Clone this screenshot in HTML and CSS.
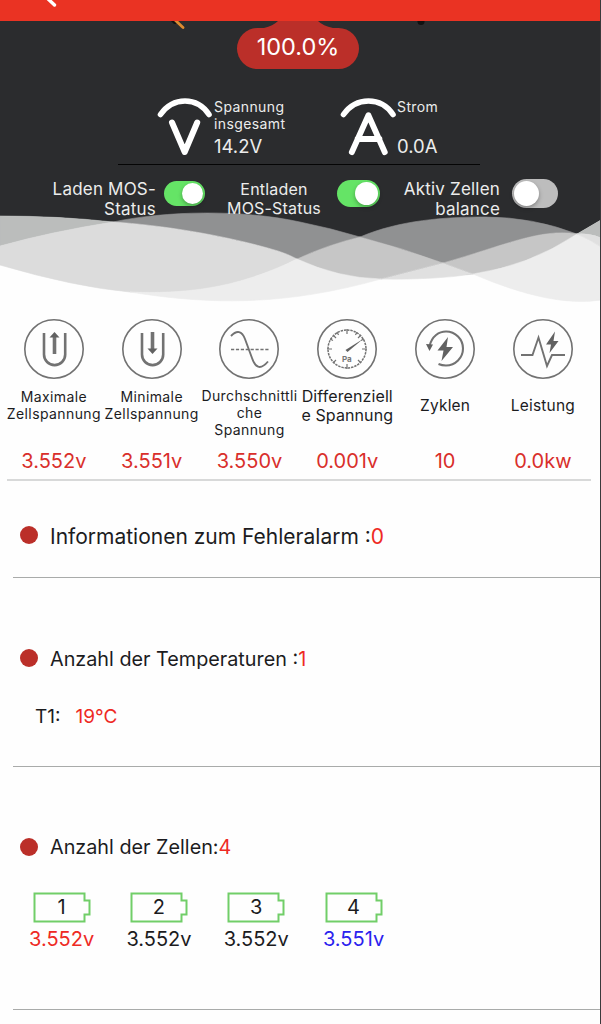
FILE: index.html
```
<!DOCTYPE html>
<html lang="de">
<head>
	<meta charset="utf-8">
	<title>BMS</title>
	<link rel="stylesheet" href="styles.css">
</head>
<body>
	<div class="topbar">
		<svg class="back" width="14" height="10" viewBox="0 0 14 10"><path d="M1-3 9.500 5" stroke="#fff" stroke-width="3.400" stroke-linecap="round"/></svg>
	</div>

	<div class="hero">
		<svg class="gauge" width="300" height="10" viewBox="150 21 300 10">
			<path d="M171 21h6l-1 3h-2z" fill="#111"/>
			<path d="M174 19l9 8.500" stroke="#dc8b30" stroke-width="2.800" stroke-linecap="round"/>
			<path d="M278 21q-5 5-14 7h69q-10-2-15-7z" fill="#bb2f29"/>
			<circle cx="421" cy="21.500" r="3.500" fill="#111"/>
		</svg>
		<div class="soc">100.0%</div>

		<div class="meters">
			<div class="meter">
				<svg width="56" height="60" viewBox="157 96 56 60" fill="none" stroke="#fff" stroke-linecap="round" stroke-linejoin="round">
					<path d="M160.500 114.500q9.500-13.500 24.500-13.500t24 13.500" stroke-width="5.600"/>
					<path d="M172 122.500l12.700 29.500 12.500-29.500" stroke-width="6"/>
				</svg>
				<div class="meter-text">
					<div class="meter-label">Spannung<br>insgesamt</div>
					<div class="meter-value">14.2V</div>
				</div>
			</div>
			<div class="meter">
				<svg width="56" height="60" viewBox="340 96 56 60" fill="none" stroke="#fff" stroke-linecap="round" stroke-linejoin="round">
					<path d="M343.500 114.500q9.500-13.500 25-13.500t24.500 13.500" stroke-width="5.600"/>
					<path d="M351.800 152.200l16.600-37 16.400 37M357.500 139h22" stroke-width="5.800"/>
				</svg>
				<div class="meter-text">
					<div class="meter-label">Strom</div>
					<div class="meter-value">0.0A</div>
				</div>
			</div>
		</div>

		<div class="switches">
			<div class="switch-label charge">Laden MOS-<br>Status</div>
			<div class="switch on charge-switch"></div>
			<div class="switch-label discharge">Entladen<br>MOS-Status</div>
			<div class="switch on discharge-switch"></div>
			<div class="switch-label balance">Aktiv Zellen<br>balance</div>
			<div class="switch balance-switch"></div>
		</div>
	</div>

	<svg class="waves" width="600" height="94" viewBox="0 210 600 94">
		<path d="M0 216Q60 216 113 222Q205 230 297 259L380 279 473 274Q525 263 577 234L601 220V304H0z" fill="#fefefe"/>
		<g stroke-width=".6">
			<path d="M0 216Q60 216 113 222Q50 232 0 246z" fill="#bbbdbc" stroke="#bbbdbc"/>
			<path d="M113 222C165 211 240 209 300 222Q330 228 360 237Q327 245 297 259Q288 254 278 251C225 235 160 225 113 222z" fill="#909192" stroke="#909192"/>
			<path d="M360 237C400 220 445 217 485 217Q533 217 577 234C540 228 503 246 443 263Q402 248 360 237z" fill="#909192" stroke="#909192"/>
			<path d="M0 246Q50 232 113 222C160 225 225 235 278 251Q288 254 297 259C235 290 180 294 130 292Q75 287 0 265z" fill="#dcdcdc" stroke="#dcdcdc"/>
			<path d="M297 259Q327 245 360 237Q402 248 443 263L381 279Q338 278 297 259z" fill="#c6c6c6" stroke="#c6c6c6"/>
			<path d="M443 263C503 246 540 228 577 234Q529 266 473 274z" fill="#c6c6c6" stroke="#c6c6c6"/>
			<path d="M381 279L443 263 473 274Q435 280 381 279z" fill="#e0e0e0" stroke="#e0e0e0"/>
			<path d="M130 292C180 294 235 290 297 259Q338 278 381 279C285 306 210 305 130 292z" fill="#ededed" stroke="#ededed"/>
			<path d="M473 274Q529 266 577 234Q591 240 601 247V300Q552 308 473 274z" fill="#ededed" stroke="#ededed"/>
			<path d="M577 234L601 220V238Q590 233 577 234z" fill="#bbbdbc" stroke="#bbbdbc"/>
			<path d="M577 234Q590 233 601 238V247Q591 240 577 234z" fill="#e0e0e0" stroke="#e0e0e0"/>
		</g>
	</svg>

	<div class="stats">
		<div class="stat">
			<svg class="stat-icon" viewBox="0 0 60 60">
				<circle cx="30" cy="30" r="29.200"/>
				<path d="M20 14v21.500a10.600 10.600 0 0 0 21.200 0V14" stroke-width="2.600"/>
				<path d="M30.500 35V17" stroke-width="3.600"/>
				<path class="solid" d="M30.500 13l5 5.500h-10z"/>
			</svg>
			<div class="stat-label">Maximale<br>Zellspannung</div>
			<div class="stat-value">3.552v</div>
		</div>
		<div class="stat">
			<svg class="stat-icon" viewBox="0 0 60 60">
				<circle cx="30" cy="30" r="29.200"/>
				<path d="M20 14v21.500a10.600 10.600 0 0 0 21.200 0V14" stroke-width="2.600"/>
				<path d="M30.500 13v18" stroke-width="3.600"/>
				<path class="solid" d="M30.500 35l5-5.500h-10z"/>
			</svg>
			<div class="stat-label">Minimale<br>Zellspannung</div>
			<div class="stat-value">3.551v</div>
		</div>
		<div class="stat">
			<svg class="stat-icon" viewBox="0 0 60 60">
				<circle cx="30" cy="30" r="29.200"/>
				<path d="M12 17C18 10.500 23 12 26 20l7 19c3 9 8 13 16 3.500" stroke-width="1.900"/>
				<path d="M12 30.500h38" stroke-width="1.600" stroke-dasharray="3.200 1.700"/>
			</svg>
			<div class="stat-label average">Durchschnittli<br>che<br>Spannung</div>
			<div class="stat-value">3.550v</div>
		</div>
		<div class="stat">
			<svg class="stat-icon" viewBox="0 0 60 60">
				<circle cx="30" cy="30" r="29.200"/>
				<circle cx="30" cy="30" r="19" stroke-width="1.500" stroke-dasharray="2.400 .9"/>
				<path d="M30 10v5M30 45v5M10 30h5M45 30h5M16 16l3 3M41 41l3 3M16 44l3-3M41 19l3-3M20 13l1.500 3M40 13l-1.500 3M13 20l3 1.500M47 20l-3 1.500" stroke-width="1.200"/>
				<path class="solid" d="M46 20L30.500 33l-2-2z"/>
				<text x="25" y="43">Pa</text>
			</svg>
			<div class="stat-label difference">Differenziell<br>e Spannung</div>
			<div class="stat-value">0.001v</div>
		</div>
		<div class="stat">
			<svg class="stat-icon" viewBox="0 0 60 60">
				<circle cx="30" cy="30" r="29.200"/>
				<path d="M14.500 27C17 17 24 12.500 31 12.500a17 17 0 0 1 0 34q-4 0-7.500-1.500" stroke-width="2.100"/>
				<path class="solid" d="M11 25l7 .5-3.500 6.500zM33 18l-10.500 13.500h6L26.500 42 38 28h-6.500z"/>
			</svg>
			<div class="stat-label single">Zyklen</div>
			<div class="stat-value">10</div>
		</div>
		<div class="stat">
			<svg class="stat-icon" viewBox="0 0 60 60">
				<circle cx="30" cy="30" r="29.200"/>
				<path d="M8 36h11.500l6-17.500L34 47l5-11h13" stroke-width="1.900"/>
				<path class="solid" d="M42 12.500L33 25.500h5L36.500 34 45.500 22H40.500z"/>
			</svg>
			<div class="stat-label single">Leistung</div>
			<div class="stat-value">0.0kw</div>
		</div>
	</div>

	<div class="section alarm">
		<div class="section-title"><i class="dot"></i><span>Informationen zum Fehleralarm :<b>0</b></span></div>
	</div>

	<div class="section temps">
		<div class="section-title"><i class="dot"></i><span class="clipped">Anzahl der Temperaturen :<b>1</b></span></div>
		<div class="temp"><span>T1:</span><b>19°C</b></div>
	</div>

	<div class="section cells">
		<div class="section-title"><i class="dot"></i><span>Anzahl der Zellen:<b>4</b></span></div>
		<div class="cell-list">
			<div class="cell max">
				<div class="battery"><svg viewBox="0 0 58 31"><path d="M1.500 1.500h50v7h5v14h-5v7h-50z"/></svg><span>1</span></div>
				<div class="cell-value">3.552v</div>
			</div>
			<div class="cell">
				<div class="battery"><svg viewBox="0 0 58 31"><path d="M1.500 1.500h50v7h5v14h-5v7h-50z"/></svg><span>2</span></div>
				<div class="cell-value">3.552v</div>
			</div>
			<div class="cell">
				<div class="battery"><svg viewBox="0 0 58 31"><path d="M1.500 1.500h50v7h5v14h-5v7h-50z"/></svg><span>3</span></div>
				<div class="cell-value">3.552v</div>
			</div>
			<div class="cell min">
				<div class="battery"><svg viewBox="0 0 58 31"><path d="M1.500 1.500h50v7h5v14h-5v7h-50z"/></svg><span>4</span></div>
				<div class="cell-value">3.551v</div>
			</div>
		</div>
	</div>
</body>
</html>
```
FILE: styles.css
```
*,
*::after {
	box-sizing: border-box;
}
body {
	margin: 0;
	height: 1024px;
	overflow: hidden;
	background: #fefefe;
	border-right: 1px solid #3a3a3c;
	font-family: Inter, "Liberation Sans", sans-serif;
	color: #1c1c1e;
}
svg {
	display: block;
	flex: none;
}
b {
	font-weight: 400;
	color: #ee2a24;
}

.topbar {
	height: 21px;
	background: #ea3323;
}
.back {
	margin-left: 45px;
}

.hero {
	height: 189px;
	background: #2b2c2e;
	color: #ececec;
}
.gauge {
	margin-left: 150px;
}
.soc {
	width: 122px;
	height: 41px;
	margin: -3px 0 0 237px;
	border-radius: 21px;
	background: #bb2f29;
	color: #fff;
	font-size: 23.500px;
	line-height: 38px;
	text-align: center;
}
.meters {
	display: flex;
	width: 362px;
	height: 96px;
	margin-left: 118px;
	padding: 27px 0 0 39px;
	border-bottom: 1px solid #050505;
}
.meter {
	flex: none;
	display: flex;
	gap: 1px;
	width: 183px;
}
.meter-text {
	padding-top: 2px;
}
.meter-label {
	height: 36px;
	font-size: 14px;
	line-height: 17px;
	letter-spacing: .4px;
}
.meter-value {
	font-size: 18.500px;
	line-height: 24px;
}

.switches {
	display: flex;
	position: relative;
	z-index: 1;
	padding-top: 14px;
}
.switch-label {
	font-size: 17px;
	line-height: 20px;
	letter-spacing: .2px;
	text-align: right;
	white-space: nowrap;
}
.charge {
	width: 156px;
}
.discharge {
	width: 116px;
	padding-top: 1px;
	font-size: 16px;
	line-height: 19px;
	text-align: center;
	margin-left: 11px;
}
.balance {
	width: 108px;
	margin-left: 12px;
}
.switch {
	border-radius: 15px;
	background: #bdbdbd;
}
.switch::after {
	content: "";
	display: block;
	height: 100%;
	aspect-ratio: 1;
	border: 2px solid transparent;
	border-radius: 50%;
	background: #fff;
	background-clip: padding-box;
	filter: drop-shadow(0 2px 2px rgba(0, 0, 0, .3));
}
.switch.on {
	background: #65e466;
}
.switch.on::after {
	margin-left: auto;
}
.charge-switch {
	width: 41px;
	height: 25px;
	margin: 2px 0 0 8px;
}
.discharge-switch {
	width: 43px;
	height: 27px;
	margin: 1px 0 0 5px;
}
.balance-switch {
	width: 46px;
	height: 29px;
	margin-left: 12px;
}
.waves {
	background: #2b2c2e;
}

.stats {
	display: flex;
	width: 584px;
	height: 177px;
	margin-left: 7px;
	padding-top: 15px;
	border-bottom: 2px solid #d8d9d9;
}
.stat {
	flex: none;
	width: 97.800px;
	display: flex;
	flex-direction: column;
	align-items: center;
	margin-left: -2px;
	margin-right: 2px;
}
.stat-icon {
	width: 60px;
	height: 60px;
	fill: none;
	stroke: #727272;
	stroke-width: 1.600;
}
.stat-icon .solid {
	fill: #616161;
	stroke: none;
}
.stat-icon text {
	font-size: 8px;
	font-weight: 700;
	fill: #777;
	stroke: none;
}
.stat-label {
	height: 72px;
	padding-top: 9px;
	font-size: 14px;
	line-height: 17px;
	letter-spacing: .4px;
	text-align: center;
	white-space: nowrap;
}
.average {
	padding-top: 8px;
}
.difference {
	font-size: 16px;
	line-height: 19px;
	letter-spacing: .1px;
	padding-top: 8px;
}
.single {
	padding-top: 18px;
	font-size: 15.500px;
	letter-spacing: .2px;
}
.stat-value {
	font-size: 20px;
	line-height: 20px;
	color: #d92f2b;
}

.section {
	margin-left: 13px;
	padding-left: 7px;
	border-bottom: 1px solid #a9abaa;
}
.alarm {
	height: 97px;
	padding-top: 43px;
}
.alarm .dot {
	margin-bottom: 4px;
}
.temps {
	height: 189px;
	padding-top: 67px;
}
.cells {
	height: 243px;
	padding-top: 67px;
}
.section-title {
	display: flex;
	align-items: center;
	height: 26px;
	font-size: 21px;
	line-height: 26px;
	gap: 12px;
	white-space: nowrap;
}
.temps .section-title,
.cells .section-title {
	font-size: 19.800px;
}
.dot {
	width: 18px;
	height: 18px;
	border-radius: 50%;
	background: #bb2f29;
}
/* the title line is cut just under the baseline */
.clipped {
	height: 22px;
	line-height: 24px;
	overflow: hidden;
}
.temp {
	display: flex;
	gap: 15px;
	margin: 34px 0 0 15px;
	font-size: 19px;
	line-height: 24px;
}
.cell-list {
	display: flex;
	margin: 32px 0 0 -7px;
}
.cell {
	width: 97.300px;
	text-align: center;
}
.battery {
	display: grid;
	justify-content: center;
}
.battery svg,
.battery span {
	grid-area: 1 / 1;
}
.battery svg {
	width: 58px;
	height: 31px;
	fill: none;
	stroke: #71ce68;
	stroke-width: 2;
}
.battery span,
.cell-value {
	font-size: 20px;
	line-height: 31px;
}
.cell-value {
	padding-top: 1px;
}
.max .cell-value {
	color: #ee2a24;
}
.min .cell-value {
	color: #2b22ee;
}
```
